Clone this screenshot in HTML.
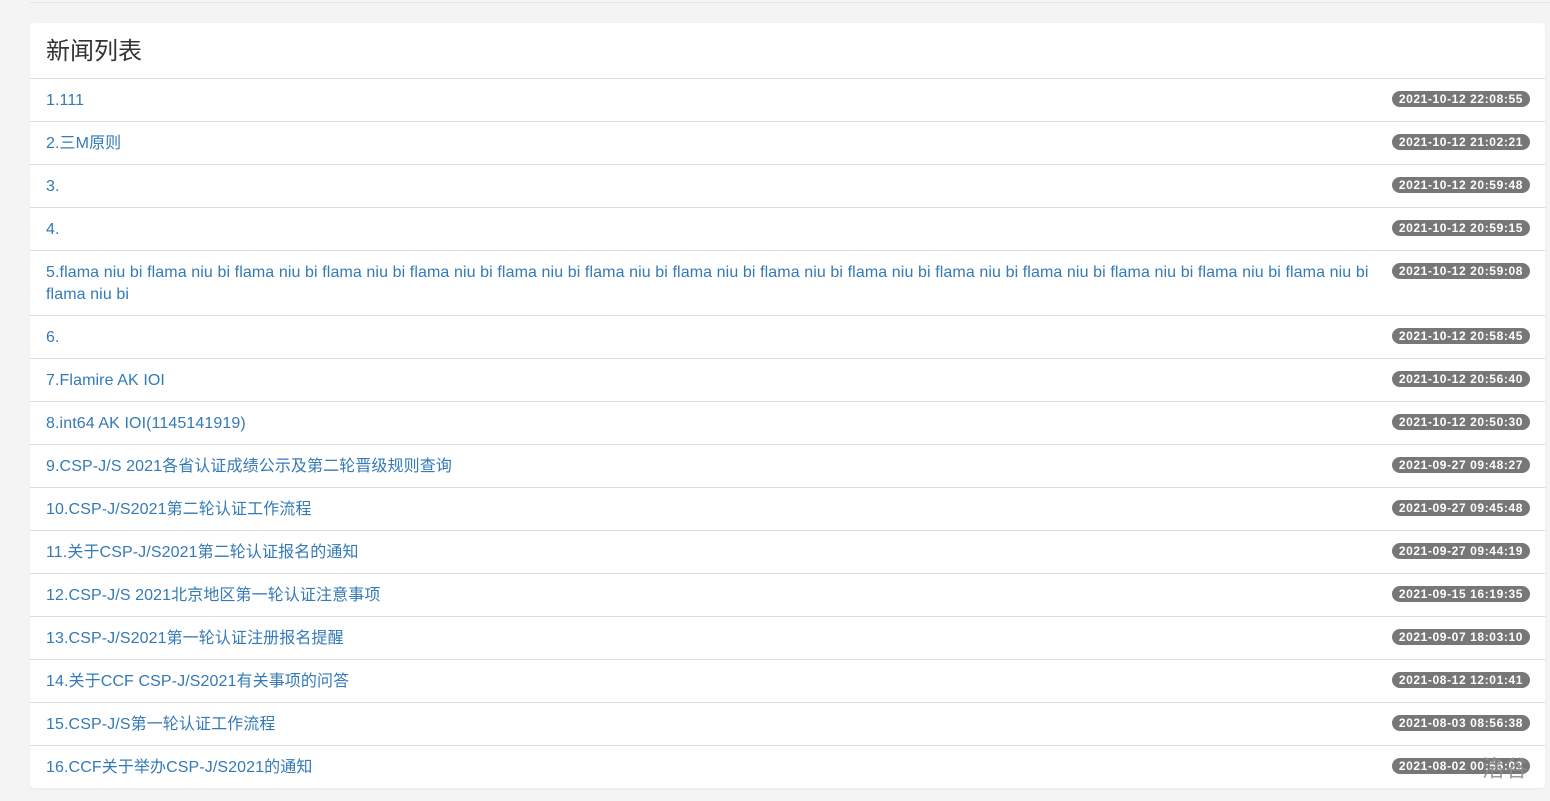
<!DOCTYPE html>
<html><head><meta charset="utf-8"><style>
body{margin:0;background:#f4f4f4;font-family:"Liberation Sans","Noto Sans CJK SC",sans-serif;width:1550px;height:801px;overflow:hidden;position:relative}
.top{position:absolute;left:30px;right:0;top:2px;height:1px;background:#e6e6e6}
.card{position:absolute;left:30px;top:23px;width:1515px;background:#fff;border-radius:4px;box-shadow:0 1px 2px rgba(0,0,0,.05)}
.hd{height:55px;box-sizing:border-box;padding:0 16px;font-size:24px;line-height:58px;color:#333}
.row{border-top:1px solid #ddd;padding:11px 15px 9px 16px;font-size:16px;line-height:22px;color:#337ab7;letter-spacing:0.1px}
.b{float:right;margin:1px 0 0 4px;background:#777;color:#fff;font-weight:bold;font-size:12px;height:16px;line-height:16px;padding:0 7px;border-radius:8px;letter-spacing:0.6px}
.wm{position:absolute;left:1482px;top:749px;font-size:23px;color:rgba(140,140,140,.85);font-family:"Noto Sans CJK SC",sans-serif}
</style></head><body>
<div class="top"></div>
<div class="card">
<div class="hd">新闻列表</div>
<div class="row"><span class="b">2021-10-12 22:08:55</span>1.111</div>
<div class="row"><span class="b">2021-10-12 21:02:21</span>2.三M原则</div>
<div class="row"><span class="b">2021-10-12 20:59:48</span>3.</div>
<div class="row"><span class="b">2021-10-12 20:59:15</span>4.</div>
<div class="row"><span class="b">2021-10-12 20:59:08</span>5.flama niu bi flama niu bi flama niu bi flama niu bi flama niu bi flama niu bi flama niu bi flama niu bi flama niu bi flama niu bi flama niu bi flama niu bi flama niu bi flama niu bi flama niu bi flama niu bi</div>
<div class="row"><span class="b">2021-10-12 20:58:45</span>6.</div>
<div class="row"><span class="b">2021-10-12 20:56:40</span>7.Flamire AK IOI</div>
<div class="row"><span class="b">2021-10-12 20:50:30</span>8.int64 AK IOI(1145141919)</div>
<div class="row"><span class="b">2021-09-27 09:48:27</span>9.CSP-J/S 2021各省认证成绩公示及第二轮晋级规则查询</div>
<div class="row"><span class="b">2021-09-27 09:45:48</span>10.CSP-J/S2021第二轮认证工作流程</div>
<div class="row"><span class="b">2021-09-27 09:44:19</span>11.关于CSP-J/S2021第二轮认证报名的通知</div>
<div class="row"><span class="b">2021-09-15 16:19:35</span>12.CSP-J/S 2021北京地区第一轮认证注意事项</div>
<div class="row"><span class="b">2021-09-07 18:03:10</span>13.CSP-J/S2021第一轮认证注册报名提醒</div>
<div class="row"><span class="b">2021-08-12 12:01:41</span>14.关于CCF CSP-J/S2021有关事项的问答</div>
<div class="row"><span class="b">2021-08-03 08:56:38</span>15.CSP-J/S第一轮认证工作流程</div>
<div class="row"><span class="b">2021-08-02 00:56:03</span>16.CCF关于举办CSP-J/S2021的通知</div>
</div>
<div class="wm">洛谷</div>
</body></html>
